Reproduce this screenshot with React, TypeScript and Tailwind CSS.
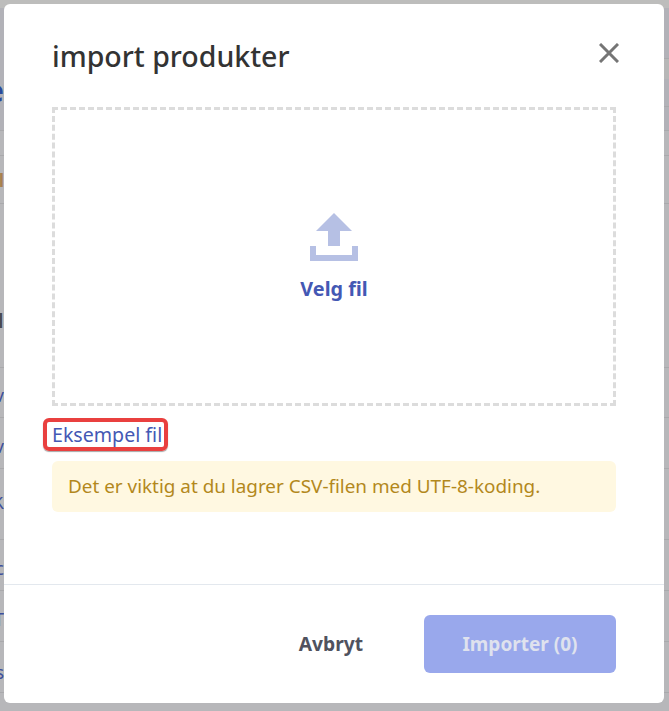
const FONT = { fontFamily: '"Noto Sans", sans-serif' };

// rows of the page behind the overlay: height, clipped text tail, its classes
const ROWS = [
    { h: "h-[123px]", tail: "e", cls: "mt-[44px] text-[30px] font-bold text-[#2a4a9c]" },
    { h: "h-[25px]", tail: "", cls: "" },
    { h: "h-[48px]", tail: "l", cls: "text-[18px] font-bold text-[#a8814f]" },
    { h: "h-[164px]", tail: "M", cls: "mt-[66px] text-[22px] font-bold text-[#4a4a50]" },
    { h: "h-[50px]", tail: "v", cls: "mt-[4px] text-[18px] text-[#3d4f9c]" },
    { h: "h-[51px]", tail: "v", cls: "mt-[6px] text-[18px] text-[#3d4f9c]" },
    { h: "h-[71px]", tail: "K", cls: "-mt-[4px] text-[18px] text-[#3d4f9c]" },
    { h: "h-[51px]", tail: "c", cls: "mt-[6px] text-[18px] text-[#3d4f9c]" },
    { h: "h-[51px]", tail: "T", cls: "mt-[6px] text-[18px] text-[#3d4f9c]" },
    { h: "h-[51px]", tail: "s", cls: "mt-[10px] text-[18px] text-[#3d4f9c]" },
];

export default function App() {
    return (
        <div className="relative h-[711px] w-[669px] overflow-hidden bg-[#b7b7ba]" style={FONT}>
            {/* Page behind the overlay */}
            <div className="h-[8px] bg-[#bdbdbc]" />
            {ROWS.map((r, i) => (
                <div key={i} className={`flex items-center overflow-hidden border-b border-[#a9a9ac] ${r.h} ${i === 0 ? "bg-[#b2b2b8]" : ""}`}>
                    <div className="flex w-[4px] justify-end overflow-hidden">
                        <span className={`leading-none ${r.cls}`}>{r.tail}</span>
                    </div>
                </div>
            ))}

            {/* Modal */}
            <div className="absolute left-1 top-1 flex h-[699px] w-[660px] flex-col rounded-md bg-white">
                <div className="flex-1 px-12 pt-[32px]">
                    <div className="flex items-center justify-between">
                        <h2 className="text-[28.5px] leading-[40px] font-medium text-[#333]">import produkter</h2>
                        <svg width="20" height="20" viewBox="0 0 20 20" className="mr-[-3px] -mt-[6px] text-[#757575]">
                            <path d="M1 1 19 19M19 1 1 19" fill="none" stroke="currentColor" strokeWidth="3" />
                        </svg>
                    </div>
                    <div className="mt-[31px] flex h-[299px] w-[564px] flex-col items-center justify-center border-[3px] border-dashed border-[#dcdcdc] pt-[3px]">
                        <svg width="48" height="48" viewBox="0 0 48 48" className="text-[#b6c0e4]">
                            <path fill="currentColor" d="M24 0 42 18H30V33H18V18H6Z" />
                            <path fill="currentColor" d="M0 33H6V42H42V33H48V48H0Z" />
                        </svg>
                        <span className="mt-[14px] text-[19.8px] leading-7 font-bold text-[#4458b4]">Velg fil</span>
                    </div>
                    <div className="mt-[12px] flex">
                        <span className="-ml-[9px] rounded-[6px] border-[4px] border-[#e9403f] pr-[2px] pl-[5px] text-[19.6px] leading-[25px] text-[#4458b4] shadow-[0_1px_1px_rgba(0,0,0,0.35)]">Eksempel fil</span>
                    </div>
                    <div className="mt-[10px] flex h-[51px] w-[564px] items-center rounded-md bg-[#fff8e1] px-4 text-[18.9px] text-[#b3881c]">
                        Det er viktig at du lagrer CSV-filen med UTF-8-koding.
                    </div>
                </div>
                <div className="flex h-[119px] items-center justify-end gap-[61px] border-t border-[#e3e8ee] px-12">
                    <span className="text-[19.2px] font-bold text-[#50525e]">Avbryt</span>
                    <button className="h-[58px] w-[192px] rounded-md bg-[#99a8ec] text-[19px] font-bold text-[#dfe2ee]">Importer (0)</button>
                </div>
            </div>

            {/* Right edge strip of the page behind */}
            <div className="absolute top-[8px] right-0 w-[5px]">
                <div className="h-[51px] border-b border-[#a9a9ac] bg-[#b2b2b8]" />
                <div className="h-[20px] bg-[#b7b7b7]" />
                <div className="h-[28px] border-b border-[#a9a9ac] bg-[#b2b2b8]" />
            </div>
        </div>
    );
}
